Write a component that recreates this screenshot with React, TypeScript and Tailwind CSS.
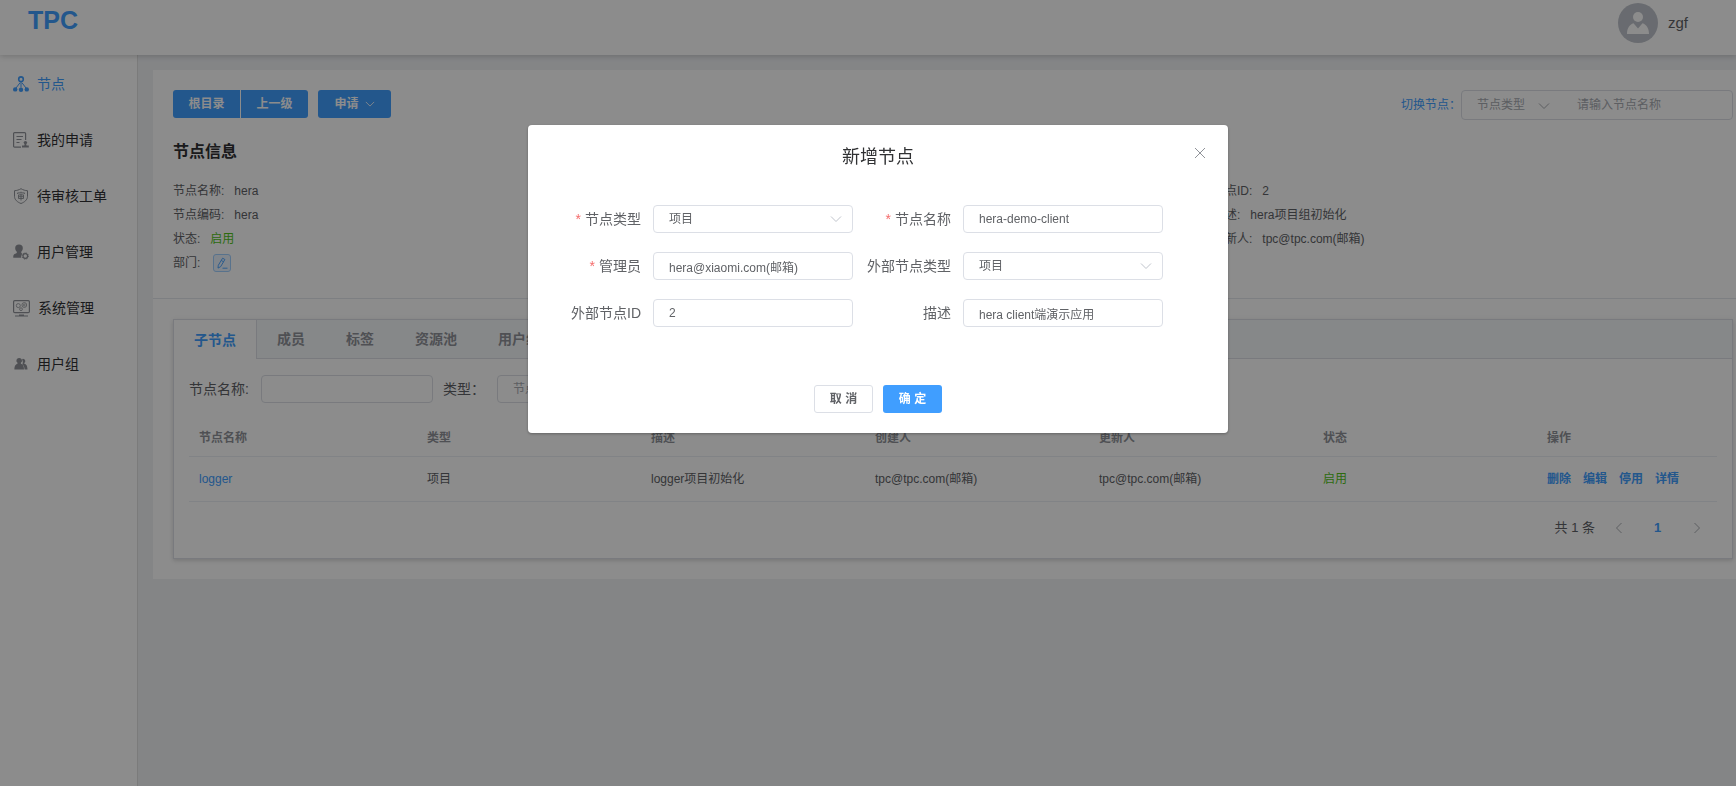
import type { ReactNode } from "react";

const menu = [
  { label: "节点", icon: <NodeIcon />, active: true },
  { label: "我的申请", icon: <ApplyIcon /> },
  { label: "待审核工单", icon: <AuditIcon /> },
  { label: "用户管理", icon: <UserManageIcon /> },
  { label: "系统管理", icon: <SystemIcon /> },
  { label: "用户组", icon: <UserGroupIcon /> },
];

const tabs = ["子节点", "成员", "标签", "资源池", "用户组"];

const columns = [
  { label: "节点名称", width: "w-[228px]" },
  { label: "类型", width: "w-[224px]" },
  { label: "描述", width: "w-[224px]" },
  { label: "创建人", width: "w-[224px]" },
  { label: "更新人", width: "w-[224px]" },
  { label: "状态", width: "w-[224px]" },
  { label: "操作", width: "w-[180px]" },
];

const rows = [
  {
    name: "logger",
    type: "项目",
    desc: "logger项目初始化",
    creator: "tpc@tpc.com(邮箱)",
    updater: "tpc@tpc.com(邮箱)",
    status: "启用",
  },
];

function NodeIcon() {
  return (
    <svg viewBox="0 0 16 16" className="h-4 w-4" fill="none" stroke="currentColor">
      <circle cx="8" cy="3.2" r="2.3" strokeWidth="1.6" />
      <path d="M8 5.5v6M7 6.8l-4 5.2M9 6.8l4 5.2" strokeWidth="1" />
      <g fill="currentColor" stroke="none">
        <circle cx="2.2" cy="13.4" r="2.2" />
        <circle cx="8" cy="13.8" r="2.2" />
        <circle cx="13.8" cy="13.4" r="2.2" />
      </g>
    </svg>
  );
}

function ApplyIcon() {
  return (
    <svg viewBox="0 0 16 16" className="h-4 w-4" fill="none" stroke="currentColor" strokeWidth="1.2">
      <path d="M8 15.2H1.6a1 1 0 0 1-1-1V1.6a1 1 0 0 1 1-1h10a1 1 0 0 1 1 1V8" />
      <path d="M3.5 4.5h6.5M3.5 7.500h5M3.5 10.5h3" />
      <g fill="currentColor" stroke="none">
        <circle cx="12.4" cy="10.6" r="1.7" />
        <path d="M11.7 11.5h1.4l.4 2h2.3v2H9v-2h2.3z" />
      </g>
    </svg>
  );
}

function AuditIcon() {
  return (
    <svg viewBox="0 0 16 16" className="h-4 w-4" fill="none" stroke="currentColor">
      <path d="M8 .7c2 1.2 4.200 1.9 6.500 2v5.6c0 3.500-3 5.900-6.500 7.200-3.500-1.300-6.500-3.700-6.500-7.200V2.700C3.800 2.600 6 1.900 8 .7z" />
      <path
        d="M8 3.700v1.200M4.600 6V4.900h6.800V6M5.500 6.900h5v3.600h-5zM5.500 8.700h5M8 6v6.500"
        strokeWidth=".9"
      />
    </svg>
  );
}

function UserManageIcon() {
  return (
    <svg viewBox="0 0 16 16" className="h-4 w-4" fill="currentColor">
      <path d="M6 .4a3.8 3.8 0 0 1 3.800 3.900c0 1.600-.7 2.700-1.500 3.500v1.300l1.200.6a4.200 4.200 0 0 0-1.200 4H.3c-.3-2.300.5-3.300 2-3.900l1.500-.8V7.800C2.900 7 2.200 5.900 2.200 4.300A3.800 3.800 0 0 1 6 .4z" />
      <circle cx="12.300" cy="12" r="2.300" fill="none" stroke="currentColor" strokeWidth="1.2" />
      <circle
        cx="12.3"
        cy="12"
        r="3.1"
        fill="none"
        stroke="currentColor"
        strokeWidth="1"
        strokeDasharray="1.2 1.23"
      />
    </svg>
  );
}

function SystemIcon() {
  return (
    <svg viewBox="0 0 17 17" className="h-[17px] w-[17px]" fill="none" stroke="currentColor">
      <rect x=".6" y=".6" width="15.8" height="12" rx="1.2" strokeWidth="1.2" />
      <circle cx="5.3" cy="5.6" r="2" strokeWidth=".8" />
      <circle cx="11.3" cy="5" r="2.4" strokeWidth=".8" />
      <circle cx="11.3" cy="5" r=".9" strokeWidth=".7" />
      <circle cx="8" cy="9.2" r="1.4" strokeWidth=".8" />
      <path d="M2 16h13M6 15h5" strokeWidth="1.2" />
    </svg>
  );
}

function UserGroupIcon() {
  return (
    <svg viewBox="0 0 16 16" className="h-4 w-4" fill="currentColor">
      <path d="M10 2.8a2.300 2.300 0 0 1 1.300 4.200v.8c2 .6 3 1.600 3.200 5.800h-2.900c-.1-3-.9-4.400-2.400-5.200.8-.8 1-3.300-.1-4.700.2-.5.500-.8.900-.9z" />
      <path d="M6.200 1.900a2.700 2.700 0 0 1 1.700 4.900v.9c2 .7 3 2 3.100 5.900H1.400c.1-3.900 1.100-5.200 3.100-5.900v-.9a2.700 2.700 0 0 1 1.700-4.900z" />
    </svg>
  );
}

function Chevron({ className }: { className: string }) {
  return (
    <svg viewBox="0 0 12 12" className={className} fill="none" stroke="currentColor" strokeWidth="1">
      <path d="M1 3.500l5 5 5-5" />
    </svg>
  );
}

function Header() {
  return (
    <header className="relative z-10 flex h-[55px] items-start justify-between bg-white pr-12 pl-7 shadow-[0_1px_6px_rgba(0,0,0,0.2)]">
      <a href="#" className="text-[25px] leading-10 font-bold text-[#409eff]">
        TPC
      </a>
      <div className="flex items-center gap-[10px] pt-[3px]">
        <span className="flex h-10 w-10 items-center justify-center rounded-full bg-[#c0c4cc]">
          <svg viewBox="0 0 22 22" className="h-[22px] w-[22px] text-white" fill="currentColor">
            <circle cx="11" cy="5" r="5" />
            <path d="M6.500 11.200 11 16.500l4.500-5.300c4 1.200 6.500 5 6.500 10.800H0c0-5.800 2.500-9.600 6.500-10.800z" />
          </svg>
        </span>
        <span className="text-[15px] text-[#606266]">zgf</span>
      </div>
    </header>
  );
}

function Sidebar() {
  return (
    <nav className="w-[138px] shrink-0 border-r border-[#e0e0e0] bg-white pt-px">
      {menu.map((item) => (
        <a
          key={item.label}
          href="#"
          className={
            item.active
              ? "flex h-14 items-center gap-2 pl-[13px] text-sm text-[#409eff]"
              : "flex h-14 items-center gap-2 pl-[13px] text-sm text-[#303133]"
          }
        >
          <span className={item.active ? "text-[#409eff]" : "text-[#909399]"}>{item.icon}</span>
          {item.label}
        </a>
      ))}
    </nav>
  );
}

function InfoItem({ label, children }: { label: string; children: ReactNode }) {
  return (
    <div className="flex gap-[10px]">
      <dt>{label}:</dt>
      <dd>{children}</dd>
    </div>
  );
}

function NodeInfo() {
  return (
    <section className="border-b border-[#e4e7ed] pt-5 pr-[3px] pb-[23px] pl-5">
      <div className="flex items-start justify-between text-xs">
        <div className="flex font-bold text-white">
          <button type="button" className="h-7 w-[67px] rounded-l-[3px] bg-[#409eff]">
            根目录
          </button>
          <button type="button" className="ml-px h-7 w-[67px] rounded-r-[3px] bg-[#409eff]">
            上一级
          </button>
          <button
            type="button"
            className="ml-[10px] flex h-7 w-[73px] items-center justify-center gap-[6px] rounded-[3px] bg-[#409eff]"
          >
            申请
            <Chevron className="h-[10px] w-[10px]" />
          </button>
        </div>
        <div className="flex items-center">
          <label htmlFor="switch-name" className="text-[#409eff]">
            切换节点：
          </label>
          <div className="flex h-[30px] w-[272px] items-center rounded border border-[#dcdfe6] text-[#a8abb2]">
            <div className="relative w-[100px]">
              <select aria-label="节点类型" className="w-full appearance-none bg-transparent pl-[15px] outline-none">
                <option>节点类型</option>
              </select>
              <Chevron className="pointer-events-none absolute top-[3px] right-3 h-3 w-3" />
            </div>
            <input
              id="switch-name"
              placeholder="请输入节点名称"
              className="min-w-0 flex-1 pr-2 pl-[15px] outline-none placeholder:text-[#a8abb2]"
            />
          </div>
        </div>
      </div>

      <h2 className="mt-5 text-base font-bold text-[#303133]">节点信息</h2>
      <dl className="mt-[15px] grid grid-cols-3 text-xs leading-6 text-[#606266]">
        <div>
          <InfoItem label="节点名称">hera</InfoItem>
          <InfoItem label="节点编码">hera</InfoItem>
          <InfoItem label="状态">
            <span className="text-[#52c41a]">启用</span>
          </InfoItem>
          <InfoItem label="部门">
            <button
              type="button"
              aria-label="编辑部门"
              className="mt-[3px] ml-[3px] flex h-[18px] w-[18px] items-center justify-center rounded-[3px] border border-[#a0cfff] bg-[#ecf5ff] text-[#409eff]"
            >
              <svg viewBox="0 0 12 12" className="h-3 w-3" fill="none" stroke="currentColor" strokeWidth=".9">
                <path d="M6.600 1.200l2.300 1.300-4.200 7.100-2.700 1.500.3-2.800zM5.300 3.500l2.300 1.300M6.500 11.200h5" />
              </svg>
            </button>
          </InfoItem>
        </div>
        <div className="col-start-3">
          <InfoItem label="节点ID">2</InfoItem>
          <InfoItem label="描述">hera项目组初始化</InfoItem>
          <InfoItem label="更新人">tpc@tpc.com(邮箱)</InfoItem>
        </div>
      </dl>
    </section>
  );
}

function ChildNodes() {
  return (
    <section className="mt-5 mr-[3px] mb-5 ml-5 border border-[#dcdfe6] shadow-[0_2px_4px_rgba(0,0,0,0.12),0_0_6px_rgba(0,0,0,0.04)]">
      <div role="tablist" className="flex border-b border-[#dcdfe6] bg-[#f5f7fa] text-sm font-bold">
        {tabs.map((tab, i) => (
          <button
            key={tab}
            type="button"
            role="tab"
            aria-selected={i === 0}
            className={
              i === 0
                ? "-mb-px h-[39px] border-r border-[#dcdfe6] bg-white px-5 text-[#409eff]"
                : "h-[38px] border-r border-transparent px-5 text-[#909399]"
            }
          >
            {tab}
          </button>
        ))}
      </div>

      <div className="px-[15px] pt-4">
        <div className="flex h-7 items-center text-sm text-[#606266]">
          <label htmlFor="filter-name" className="w-[72px]">
            节点名称:
          </label>
          <input
            id="filter-name"
            className="h-7 w-[172px] rounded border border-[#dcdfe6] px-[15px] text-xs outline-none"
          />
          <label htmlFor="filter-type" className="ml-[10px] w-[54px]">
            类型：
          </label>
          <div className="relative">
            <select
              id="filter-type"
              className="h-7 w-[172px] appearance-none rounded border border-[#dcdfe6] px-[15px] text-xs text-[#a8abb2] outline-none"
            >
              <option>节点类型</option>
            </select>
            <Chevron className="pointer-events-none absolute top-2 right-3 h-3 w-3 text-[#c0c4cc]" />
          </div>
        </div>

        <table className="mt-[18px] w-full table-fixed text-left text-xs text-[#606266]">
          <thead>
            <tr className="h-[35px] border-b border-[#ebeef5] text-[#909399]">
              {columns.map((col) => (
                <th key={col.label} className={`${col.width} px-[10px]`}>
                  {col.label}
                </th>
              ))}
            </tr>
          </thead>
          <tbody>
            {rows.map((row) => (
              <tr key={row.name} className="h-[45px] border-b border-[#ebeef5]">
                <td className="px-[10px]">
                  <a href="#" className="text-[#409eff]">
                    {row.name}
                  </a>
                </td>
                <td className="px-[10px]">{row.type}</td>
                <td className="px-[10px]">{row.desc}</td>
                <td className="px-[10px]">{row.creator}</td>
                <td className="px-[10px]">{row.updater}</td>
                <td className="px-[10px] text-[#52c41a]">{row.status}</td>
                <td className="px-[10px]">
                  <div className="flex gap-3 font-bold text-[#409eff]">
                    <button type="button">删除</button>
                    <button type="button">编辑</button>
                    <button type="button">停用</button>
                    <button type="button">详情</button>
                  </div>
                </td>
              </tr>
            ))}
          </tbody>
        </table>

        <div className="flex items-center justify-end pt-3 pr-[3px] pb-4 text-[13px] text-[#606266]">
          <span>共 1 条</span>
          <button type="button" aria-label="上一页" className="ml-[6px] flex h-7 w-[35px] items-center justify-center text-[#a8abb2]">
            <Chevron className="h-3 w-3 rotate-90" />
          </button>
          <button type="button" className="ml-1 h-7 w-[35px] font-bold text-[#409eff]">
            1
          </button>
          <button type="button" aria-label="下一页" className="ml-1 flex h-7 w-[35px] items-center justify-center text-[#a8abb2]">
            <Chevron className="h-3 w-3 -rotate-90" />
          </button>
        </div>
      </div>
    </section>
  );
}

type FieldProps = {
  id: string;
  label: string;
  value: string;
  required?: boolean;
  select?: boolean;
};

function Field({ id, label, value, required, select }: FieldProps) {
  return (
    <div className="flex items-center">
      <label htmlFor={id} className="w-[110px] pr-3 text-right text-sm whitespace-nowrap text-[#606266]">
        {required && <span className="mr-1 text-[#f56c6c]">*</span>}
        {label}
      </label>
      {select ? (
        <div className="relative w-[200px]">
          <select
            id={id}
            className="h-7 w-full appearance-none rounded border border-[#dcdfe6] bg-white px-[15px] text-xs text-[#606266] outline-none"
          >
            <option>{value}</option>
          </select>
          <Chevron className="pointer-events-none absolute top-2 right-[11px] h-3 w-3 text-[#c0c4cc]" />
        </div>
      ) : (
        <input
          id={id}
          defaultValue={value}
          className="h-7 w-[200px] rounded border border-[#dcdfe6] px-[15px] text-xs text-[#606266] outline-none"
        />
      )}
    </div>
  );
}

function AddNodeDialog() {
  return (
    <div className="fixed inset-0 z-20 flex items-start justify-center bg-black/45 pt-[125px] pl-5">
      <div
        role="dialog"
        aria-modal="true"
        aria-labelledby="dialog-title"
        className="relative w-[700px] rounded-sm bg-white pt-[18px] pb-5 shadow-[0_1px_3px_rgba(0,0,0,0.3)]"
      >
        <h1 id="dialog-title" className="text-center text-lg text-[#303133]">
          新增节点
        </h1>
        <button type="button" aria-label="关闭" className="absolute top-5 right-5 p-[3px] text-[#909399]">
          <svg viewBox="0 0 10 10" className="h-[10px] w-[10px]" fill="none" stroke="currentColor" strokeWidth="1">
            <path d="M0 0l10 10M10 0L0 10" />
          </svg>
        </button>
        <form>
          <div className="mt-[34px] grid grid-cols-[310px_310px] gap-y-[19px] pl-[15px]">
            <Field id="node-type" label="节点类型" value="项目" required select />
            <Field id="node-name" label="节点名称" value="hera-demo-client" required />
            <Field id="manager" label="管理员" value="hera@xiaomi.com(邮箱)" required />
            <Field id="out-type" label="外部节点类型" value="项目" select />
            <Field id="out-id" label="外部节点ID" value="2" />
            <Field id="desc" label="描述" value="hera client端演示应用" />
          </div>
          <div className="mt-[58px] flex justify-center gap-[10px] text-xs font-bold">
            <button type="button" className="h-7 w-[59px] rounded-[3px] border border-[#dcdfe6] text-[#606266]">
              取 消
            </button>
            <button type="button" className="h-7 w-[59px] rounded-[3px] bg-[#409eff] text-white">
              确 定
            </button>
          </div>
        </form>
      </div>
    </div>
  );
}

export default function App() {
  return (
    <div className="flex min-h-screen flex-col bg-[#f0f2f5] font-['Liberation_Sans','Noto_Sans_CJK_SC',sans-serif]">
      <Header />
      <div className="flex flex-1">
        <Sidebar />
        <main className="min-w-0 flex-1 pt-[15px] pl-[15px]">
          <div className="flow-root bg-white">
            <NodeInfo />
            <ChildNodes />
          </div>
        </main>
      </div>
      <AddNodeDialog />
    </div>
  );
}
